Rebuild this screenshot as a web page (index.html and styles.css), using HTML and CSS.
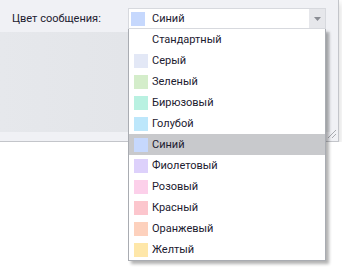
FILE: index.html
```html
<!DOCTYPE html>
<html lang="ru">
<head>
    <meta charset="UTF-8">
    <title>Цвет сообщения</title>
    <link rel="stylesheet" href="styles.css">
</head>
<body>
    <div class="window">
        <div class="row">
            <span class="label">Цвет сообщения:</span>
            <div class="combo">
                <span class="swatch" style="background-color: #c6d8fd;"></span>
                <span class="combo-text">Синий</span>
                <span class="combo-btn">
                    <svg width="7" height="4" viewBox="0 0 7 4"><path d="M0 0H7L3.5 4Z" fill="#8a8d94"/></svg>
                </span>
            </div>
        </div>
        <div class="content"></div>
        <svg class="grip" width="9" height="9" viewBox="0 0 9 9">
            <path d="M1 9L9 1M5 9L9 5" stroke="#a9abb0" stroke-width="1"/>
        </svg>
    </div>

    <ul class="dropdown">
        <li class="item"><span class="swatch none"></span>Стандартный</li>
        <li class="item"><span class="swatch" style="background-color: #e3e8f6;"></span>Серый</li>
        <li class="item"><span class="swatch" style="background-color: #d4edca;"></span>Зеленый</li>
        <li class="item"><span class="swatch" style="background-color: #b9f1e1;"></span>Бирюзовый</li>
        <li class="item"><span class="swatch" style="background-color: #bde7fb;"></span>Голубой</li>
        <li class="item selected"><span class="swatch" style="background-color: #c6d8fd;"></span>Синий</li>
        <li class="item"><span class="swatch" style="background-color: #ddd1fb;"></span>Фиолетовый</li>
        <li class="item"><span class="swatch" style="background-color: #fcd0ea;"></span>Розовый</li>
        <li class="item"><span class="swatch" style="background-color: #fcc6cd;"></span>Красный</li>
        <li class="item"><span class="swatch" style="background-color: #fdd1bd;"></span>Оранжевый</li>
        <li class="item"><span class="swatch" style="background-color: #fee7a9;"></span>Желтый</li>
    </ul>
</body>
</html>
```

FILE: styles.css
```css
body {
    margin: 0;
    background-color: #ffffff;
    font-family: Roboto, "Noto Sans", sans-serif;
    font-size: 11px;
    color: #1c2030;
}
.window {
    position: relative;
    width: 338px;
    height: 141px;
    background-color: #f0f1f5;
    border-right: 1px solid #c3c5ca;
    border-bottom: 1px solid #c3c5ca;
    box-shadow: 2px 3px 6px rgba(0,0,0,0.12);
}
.row {
    display: flex;
    align-items: center;
    padding: 8px 0 0 12px;
    height: 21px;
}
.label {
    width: 116px;
}
.combo {
    box-sizing: border-box;
    width: 198px;
    height: 21px;
    display: flex;
    align-items: center;
    background: white;
    border: 1px solid #d7d9de;
}
.combo .swatch {
    margin-left: 2px;
    margin-right: 7px;
}
.combo-text {
    flex: 1;
}
.combo-btn {
    width: 16px;
    height: 19px;
    display: flex;
    align-items: center;
    justify-content: center;
    background-color: #e6e7eb;
}
.content {
    margin-top: 3px;
    margin-right: 8px;
    height: 100px;
    background: linear-gradient(90deg, #e6e8ec 0%, #e2e4e8 50%, #e5e7eb 100%);
}
.grip {
    position: absolute;
    right: 2px;
    bottom: 3px;
}
.swatch {
    display: inline-block;
    width: 14px;
    height: 14px;
    flex-shrink: 0;
}
.dropdown {
    position: absolute;
    top: 29px;
    left: 128px;
    width: 196px;
    margin: 0;
    padding: 0;
    list-style: none;
    background: white;
    border: 1px solid #a9acb2;
    border-top: none;
    box-shadow: 3px 3px 3px rgba(0,0,0,0.3);
}
.item {
    display: flex;
    align-items: center;
    height: 21px;
    padding-left: 5px;
}
.item .swatch {
    margin-right: 4px;
}
.swatch.none {
    background: transparent;
}
.selected {
    background-color: #c8c9cc;
}
```
